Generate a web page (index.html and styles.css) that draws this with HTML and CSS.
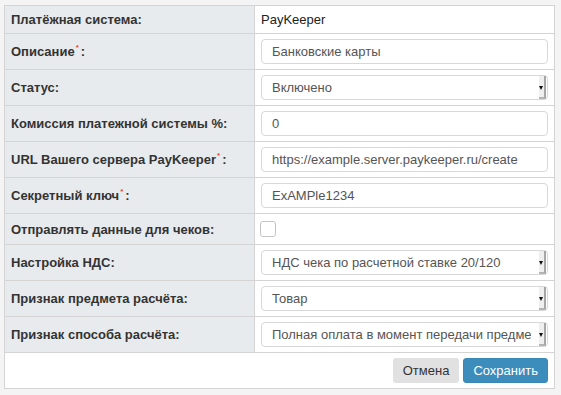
FILE: index.html
```html
<!DOCTYPE html>
<html>
    <head>
        <meta charset="UTF-8">
        <meta name="viewport" content="width=device-width, initial-scale=1.0">
        <title>PayKeeper</title>
        <link rel="stylesheet" href="styles.css">
    </head>
    <body>
        <div class="panel">
            <table class="settings">
                <tr class="text-row">
                    <th>Платёжная система:</th>
                    <td>PayKeeper</td>
                </tr>
                <tr>
                    <th>Описание<sup class="req">*</sup>:</th>
                    <td><input class="field" type="text" value="Банковские карты"></td>
                </tr>
                <tr>
                    <th>Статус:</th>
                    <td>
                        <div class="select-wrap">
                            <select class="field"><option>Включено</option></select>
                            <span class="arrow"></span>
                        </div>
                    </td>
                </tr>
                <tr>
                    <th>Комиссия платежной системы %:</th>
                    <td><input class="field" type="text" value="0"></td>
                </tr>
                <tr>
                    <th>URL Вашего сервера PayKeeper<sup class="req">*</sup>:</th>
                    <td><input class="field" type="text" value="https://example.server.paykeeper.ru/create"></td>
                </tr>
                <tr>
                    <th>Секретный ключ<sup class="req">*</sup>:</th>
                    <td><input class="field" type="text" value="ExAMPle1234"></td>
                </tr>
                <tr class="check-row">
                    <th>Отправлять данные для чеков:</th>
                    <td><input class="check" type="checkbox"></td>
                </tr>
                <tr>
                    <th>Настройка НДС:</th>
                    <td>
                        <div class="select-wrap">
                            <select class="field"><option>НДС чека по расчетной ставке 20/120</option></select>
                            <span class="arrow"></span>
                        </div>
                    </td>
                </tr>
                <tr>
                    <th>Признак предмета расчёта:</th>
                    <td>
                        <div class="select-wrap">
                            <select class="field"><option>Товар</option></select>
                            <span class="arrow"></span>
                        </div>
                    </td>
                </tr>
                <tr>
                    <th>Признак способа расчёта:</th>
                    <td>
                        <div class="select-wrap">
                            <select class="field"><option>Полная оплата в момент передачи предмета расчёта</option></select>
                            <span class="arrow"></span>
                        </div>
                    </td>
                </tr>
                <tr class="actions">
                    <td colspan="2">
                        <div class="buttons">
                            <button class="btn btn-default" type="button">Отмена</button>
                            <button class="btn btn-primary" type="button">Сохранить</button>
                        </div>
                    </td>
                </tr>
            </table>
        </div>
    </body>
</html>
```

FILE: styles.css
```css
*{
    margin: 0;
    padding: 0;
    box-sizing: border-box;
    font-family: "Liberation Sans", Arial, sans-serif;
}
body{
    background-color: #f4f4f4;
    color: #333;
    font-size: 13px;
}
.panel{
    padding: 5px 0 0 4px;
}
.settings{
    width: 551px;
    border-collapse: collapse;
    background-color: #fff;
    border: 1px solid #d4d4d4;
}
.settings th,
.settings td{
    border: 1px solid #d4d4d4;
    line-height: 15px;
    vertical-align: middle;
    text-align: left;
}
.settings th{
    width: 250px;
    padding: 5px 6px;
    background-color: #e8ebee;
    font-weight: bold;
    color: #333;
}
.settings td{
    padding: 5px 6px;
    color: #222;
}
.text-row th,
.text-row td{
    padding-top: 6px;
    padding-bottom: 6px;
}
.check-row td{
    padding: 7px 5px;
}
.req{
    color: #dd4b39;
    font-size: 8px;
    line-height: 0;
    vertical-align: 6px;
    margin-left: 1px;
    margin-right: 2px;
}
.field{
    display: block;
    width: 100%;
    height: 25px;
    padding: 0 10px;
    border: 1px solid #d8d8d8;
    border-radius: 4px;
    background-color: #fff;
    color: #555;
    font-size: 13px;
    outline: none;
}
select.field{
    appearance: none;
    -webkit-appearance: none;
    padding-right: 16px;
}
.select-wrap{
    position: relative;
}
.select-wrap .arrow{
    position: absolute;
    right: 2px;
    top: 1px;
    bottom: 1px;
    width: 7px;
    background-color: #efefef;
    border-right: 2px solid #a6a6a6;
    border-bottom: 2px solid #b4b4b4;
    pointer-events: none;
}
.select-wrap .arrow::after{
    content: "";
    position: absolute;
    left: 0;
    top: 10px;
    border-left: 2.5px solid transparent;
    border-right: 2.5px solid transparent;
    border-top: 4px solid #111;
}
.check{
    appearance: none;
    -webkit-appearance: none;
    display: block;
    width: 16px;
    height: 16px;
    border: 1px solid #c4c4c4;
    border-radius: 3px;
    background-color: #fff;
}
.buttons{
    display: flex;
    justify-content: flex-end;
    gap: 4px;
}
.btn{
    height: 25px;
    padding: 0 9px;
    border: 1px solid transparent;
    border-radius: 3px;
    font-size: 13px;
    cursor: pointer;
}
.btn-default{
    background-color: #e1e1e1;
    color: #333;
}
.btn-primary{
    background-color: #3c8dbc;
    border-color: #3a88b6;
    color: #fff;
}
```
